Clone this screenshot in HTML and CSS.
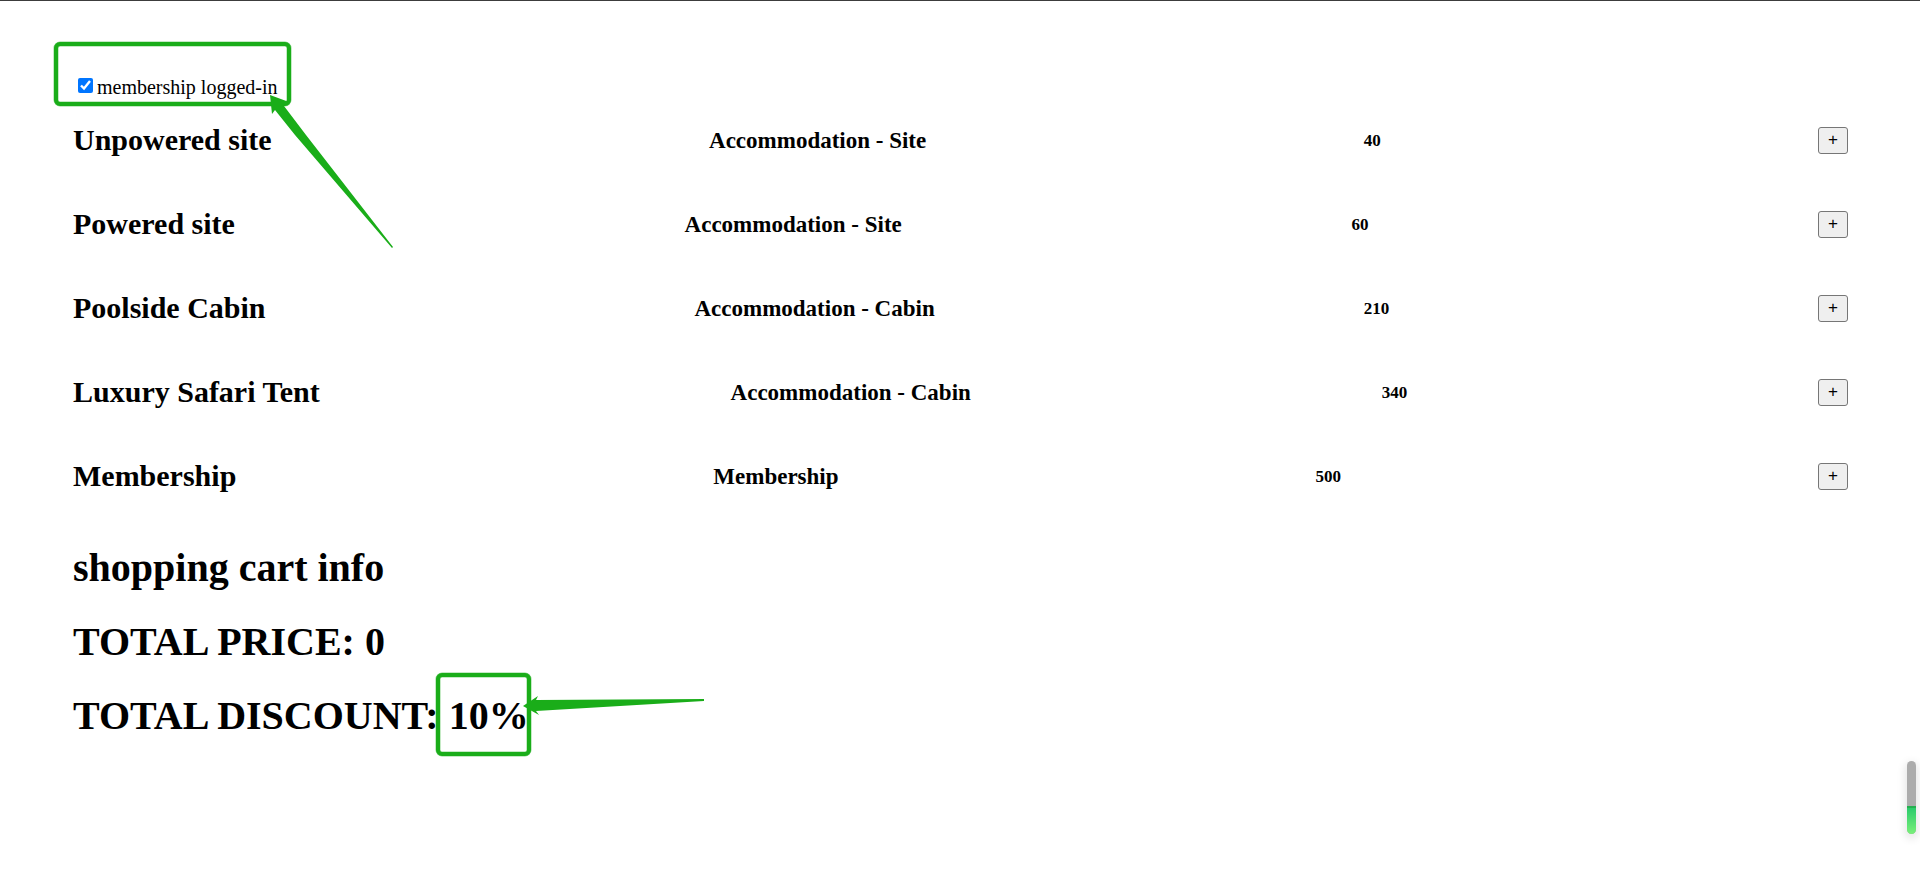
FILE: index.html
```html
<!DOCTYPE html>
<html lang="en">
<head>
<meta charset="utf-8">
<title>Shopping cart</title>
<link rel="stylesheet" href="styles.css">
</head>
<body>
<main class="page">
  <div class="member">
    <input class="member-check" type="checkbox" id="member" checked>
    <label for="member">membership logged-in</label>
    <svg class="note note-member" width="344" height="212" viewBox="50 38 344 212" aria-hidden="true">
      <rect class="note-halo" x="56" y="44" width="233" height="60" rx="4"/>
      <rect class="note-box" x="56" y="44" width="233" height="60" rx="4"/>
      <path class="note-arrow" d="M270 95L289 102L284 106L306 135L393 247L392 248L295 135L275 110L272 114Z"/>
    </svg>
  </div>
  <section class="products">
    <div class="product"><h2>Unpowered site</h2><h3>Accommodation - Site</h3><h5>40</h5><button class="add" type="button">+</button></div>
    <div class="product"><h2>Powered site</h2><h3>Accommodation - Site</h3><h5>60</h5><button class="add" type="button">+</button></div>
    <div class="product"><h2>Poolside Cabin</h2><h3>Accommodation - Cabin</h3><h5>210</h5><button class="add" type="button">+</button></div>
    <div class="product"><h2>Luxury Safari Tent</h2><h3>Accommodation - Cabin</h3><h5>340</h5><button class="add" type="button">+</button></div>
    <div class="product"><h2>Membership</h2><h3>Membership</h3><h5>500</h5><button class="add" type="button">+</button></div>
  </section>
  <section class="cart">
    <h1>shopping cart info</h1>
    <h1>TOTAL PRICE: 0</h1>
    <h1 class="discount">TOTAL DISCOUNT: 10%
      <svg class="note note-discount" width="276" height="90" viewBox="432 670 276 90" aria-hidden="true">
        <rect class="note-halo" x="438" y="675" width="91" height="79" rx="4"/>
        <rect class="note-box" x="438" y="675" width="91" height="79" rx="4"/>
        <path class="note-arrow" d="M523 706L538 696L536 700L704 699L704 701L536 711L539 715Z"/>
      </svg>
    </h1>
  </section>
</main>
<div class="meter"><div class="meter-level"></div></div>
</body>
</html>
```
FILE: styles.css
```css
body {
  margin: 0;
  background: #fff;
  color: #000;
  font: 20px/22px "Liberation Serif", "Times New Roman", serif;
  border-top: 1px solid #3c3c3c;
}
.page { padding: 75px 72px 60px 73px; }
.member {
  position: relative;
  display: flex;
  gap: 4px;
}
.member-check {
  width: 15px;
  height: 15px;
  margin: 2px 0 0 5px;
  accent-color: #0075ff;
}
.product {
  display: flex;
  justify-content: space-between;
  align-items: center;
}
h1, h2, h3, h5 { margin: 0; }
h2 {
  margin: 25px 0;
  font-size: 30px;
  line-height: 34px;
}
h3 { font-size: 23px; line-height: 27px; }
h5 { font-size: 17px; line-height: 19px; }
.add {
  padding: 0 9px 2px;
  border: 1px solid #767676;
  border-radius: 3px;
  background: #efefef;
  color: #000;
  font: 17px/23px "Liberation Sans", Arial, sans-serif;
}
.cart {
  display: flex;
  flex-direction: column;
  align-items: flex-start;
  gap: 28px;
  padding-top: 27px;
}
h1 { font-size: 40px; line-height: 46px; }
.discount { position: relative; }
.note {
  position: absolute;
  overflow: visible;
  pointer-events: none;
}
.note-member { left: -23px; top: -38px; }
.note-discount { left: 359px; top: -23px; }
.note-box, .note-halo { fill: none; stroke: #1aad19; stroke-width: 4; }
.note-halo { stroke-width: 5; opacity: 0.5; }
.note-arrow { fill: #1aad19; }
.meter {
  position: fixed;
  right: 4px;
  bottom: 58px;
  width: 9px;
  height: 73px;
  display: flex;
  align-items: flex-end;
  border-radius: 5px;
  background: #acacac;
  box-shadow: 0 3px 8px 2px rgba(0, 0, 0, 0.1);
  overflow: hidden;
}
.meter-level {
  width: 100%;
  height: 28px;
  border-top: 2px solid #24b04f;
  box-sizing: border-box;
  background: linear-gradient(#2bcb6b, #7af07a);
}
```
